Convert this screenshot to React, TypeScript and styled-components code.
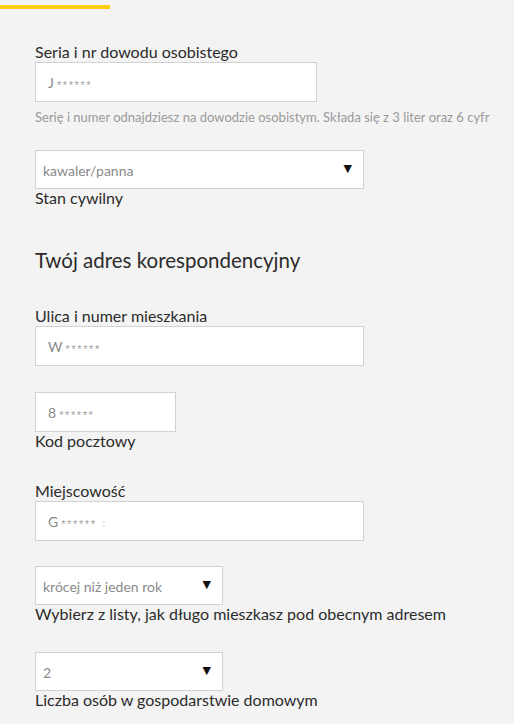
import React from "react";
import styled, { createGlobalStyle } from "styled-components";

const Global = createGlobalStyle`
  html, body { margin: 0; padding: 0; background: #f3f3f3; }
  body { font-family: Lato, "Open Sans", "Liberation Sans", sans-serif; color: #2b2b2b; }
`;

const Page = styled.div`
  width: 514px;
  min-height: 724px;
  background: #f3f3f3;
  padding-top: 5px;
  box-sizing: border-box;
`;

const Accent = styled.div`
  width: 110px;
  height: 4px;
  background: #ffcf0f;
`;

const Form = styled.div`
  display: flex;
  flex-direction: column;
  padding: 0 0 0 35px;
`;

const Field = styled.div<{ $mt: number }>`
  display: flex;
  flex-direction: column;
  margin-top: ${(p) => p.$mt}px;
`;

const Label = styled.div`
  font-size: 16px;
  line-height: 18px;
  color: #2b2b2b;
  height: 19px;
  white-space: nowrap;
`;

const Heading = styled.h2`
  margin: 0;
  font-weight: 400;
  font-size: 20.5px;
  line-height: 22px;
  color: #2b2b2b;
`;

const Box = styled.div<{ $w: number; $h?: number }>`
  box-sizing: border-box;
  width: ${(p) => p.$w}px;
  height: ${(p) => p.$h ?? 40}px;
  background: #fff;
  border: 1px solid #d2d2d2;
  display: flex;
  align-items: center;
  font-size: 14px;
  color: #8a8a8a;
`;

const InputBox = styled(Box)`
  padding-left: 12px;
`;

const SelectBox = styled(Box)`
  padding: 2px 11px 0 7px;
  justify-content: space-between;
`;

const Arrow = styled.span`
  color: #111;
  font-size: 11px;
  margin-top: -5px;
  font-family: "DejaVu Sans", sans-serif;
`;

const Stars = styled.span`
  font-family: "Liberation Sans", sans-serif;
  font-size: 11px;
  letter-spacing: 1.6px;
  color: #a0a0a0;
  margin-left: 3px;
  position: relative;
  top: 1px;
`;

const Faint = styled.span`
  color: #c9c9c9;
  font-size: 11px;
  margin-left: 6px;
`;

const Hint = styled.div`
  margin-top: 8px;
  font-size: 13px;
  line-height: 14px;
  color: #9a9a9a;
  white-space: nowrap;
`;

const Masked = ({ first, tail }: { first: string; tail?: boolean }) => (
  <span>
    {first}
    <Stars>******</Stars>
    {tail && <Faint>:</Faint>}
  </span>
);

export default function App() {
  return (
    <Page>
      <Global />
      <Accent />
      <Form>
        <Field $mt={34}>
          <Label>Seria i nr dowodu osobistego</Label>
          <InputBox $w={282}>
            <Masked first="J" />
          </InputBox>
          <Hint>Serię i numer odnajdziesz na dowodzie osobistym. Składa się z 3 liter oraz 6 cyfr</Hint>
        </Field>
        <Field $mt={26}>
          <SelectBox $w={329} $h={39}>
            <span>kawaler/panna</span>
            <Arrow>▼</Arrow>
          </SelectBox>
          <Label>Stan cywilny</Label>
        </Field>
        <Field $mt={41}>
          <Heading>Twój adres korespondencyjny</Heading>
        </Field>
        <Field $mt={36}>
          <Label>Ulica i numer mieszkania</Label>
          <InputBox $w={329}>
            <Masked first="W" />
          </InputBox>
        </Field>
        <Field $mt={26}>
          <InputBox $w={141}>
            <Masked first="8" />
          </InputBox>
          <Label>Kod pocztowy</Label>
        </Field>
        <Field $mt={31}>
          <Label>Miejscowość</Label>
          <InputBox $w={329}>
            <Masked first="G" tail />
          </InputBox>
        </Field>
        <Field $mt={25}>
          <SelectBox $w={188} $h={39}>
            <span>krócej niż jeden rok</span>
            <Arrow>▼</Arrow>
          </SelectBox>
          <Label>Wybierz z listy, jak długo mieszkasz pod obecnym adresem</Label>
        </Field>
        <Field $mt={28}>
          <SelectBox $w={188} $h={39}>
            <span>2</span>
            <Arrow>▼</Arrow>
          </SelectBox>
          <Label>Liczba osób w gospodarstwie domowym</Label>
        </Field>
      </Form>
    </Page>
  );
}
